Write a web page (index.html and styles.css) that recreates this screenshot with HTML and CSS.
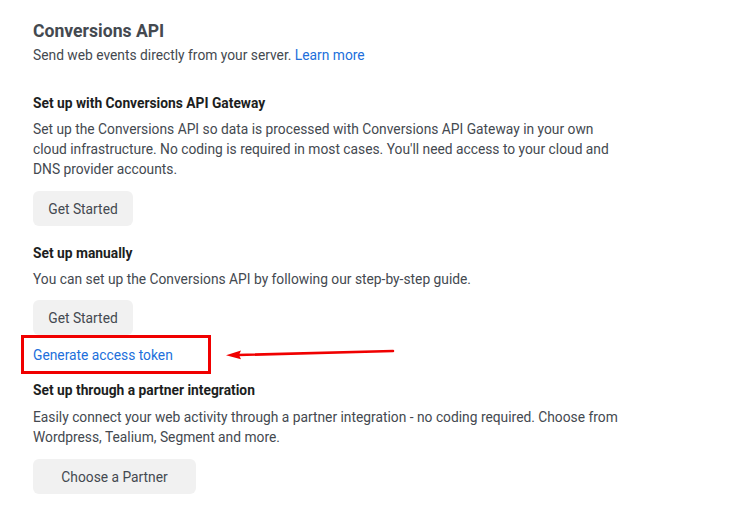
FILE: index.html
```html
<!DOCTYPE html>
<html lang="en">
<head>
<meta charset="utf-8">
<title>Conversions API</title>
<link rel="stylesheet" href="styles.css">
</head>
<body>
<main class="page">
  <h1 class="title">Conversions API</h1>
  <p class="subtitle">Send web events directly from your server. <a class="link" href="#">Learn more</a></p>

  <section class="block block-first">
    <h2 class="heading">Set up with Conversions API Gateway</h2>
    <p class="text">Set up the Conversions API so data is processed with Conversions API Gateway in your own<br>cloud infrastructure. No coding is required in most cases. You'll need access to your cloud and<br>DNS provider accounts.</p>
    <button class="btn btn-small" type="button">Get Started</button>
  </section>

  <section class="block">
    <h2 class="heading">Set up manually</h2>
    <p class="text">You can set up the Conversions API by following our step-by-step guide.</p>
    <button class="btn btn-small" type="button">Get Started</button>
    <div class="token-row">
      <div class="token-box"><a class="link" href="#">Generate access token</a></div>
      <svg class="arrow" width="175" height="14" viewBox="0 0 175 14" aria-hidden="true">
        <line x1="12" y1="8" x2="167" y2="4" stroke="#f00000" stroke-width="2.6" stroke-linecap="round"/>
        <polygon points="0,8.3 15,3.5 13,8 15,12.3" fill="#f00000"/>
      </svg>
    </div>
  </section>

  <section class="block block-partner">
    <h2 class="heading">Set up through a partner integration</h2>
    <p class="text">Easily connect your web activity through a partner integration - no coding required. Choose from<br>Wordpress, Tealium, Segment and more.</p>
    <button class="btn btn-wide" type="button">Choose a Partner</button>
  </section>
</main>
</body>
</html>
```

FILE: styles.css
```css
* { box-sizing: border-box; }

html, body {
  margin: 0;
  padding: 0;
  background: #ffffff;
}

body {
  font-family: Roboto, "Liberation Sans", Arial, sans-serif;
  color: #444950;
}

.page {
  padding: 19px 0 0 33px;
  display: flex;
  flex-direction: column;
}

.title {
  margin: 0;
  font-size: 17.6px;
  line-height: 24px;
  font-weight: 700;
  color: #444950;
}

.subtitle {
  margin: 2px 0 0;
  font-size: 13.8px;
  line-height: 20px;
}

.link {
  color: #216fdb;
  text-decoration: none;
}

.block {
  display: flex;
  flex-direction: column;
  align-items: flex-start;
  margin-top: 17px;
}

.block-first { margin-top: 28px; }
.block-partner { margin-top: 6px; }

.heading {
  margin: 0;
  font-size: 13.8px;
  line-height: 20px;
  font-weight: 700;
  color: #1c1e21;
}

.text {
  margin: 6px 0 0;
  font-size: 13.8px;
  line-height: 20px;
  color: #444950;
}

.block-partner .text { margin-top: 7px; }

.btn {
  margin-top: 12px;
  height: 35px;
  border: none;
  border-radius: 6px;
  background: #f1f1f1;
  color: #444950;
  font-family: inherit;
  font-size: 13.8px;
  padding: 0;
}

.btn-small { width: 100px; }
.block:not(.block-first) .btn-small { margin-top: 11px; }
.btn-wide { width: 163px; margin-top: 12px; }

.token-row {
  display: flex;
  align-items: center;
  margin-left: -12px;
}

.token-box {
  width: 190px;
  height: 39px;
  border: 3px solid #f00000;
  padding-left: 9px;
  display: flex;
  align-items: center;
  font-size: 13.8px;
}

.arrow {
  margin-left: 15px;
  margin-top: -1px;
}
```
